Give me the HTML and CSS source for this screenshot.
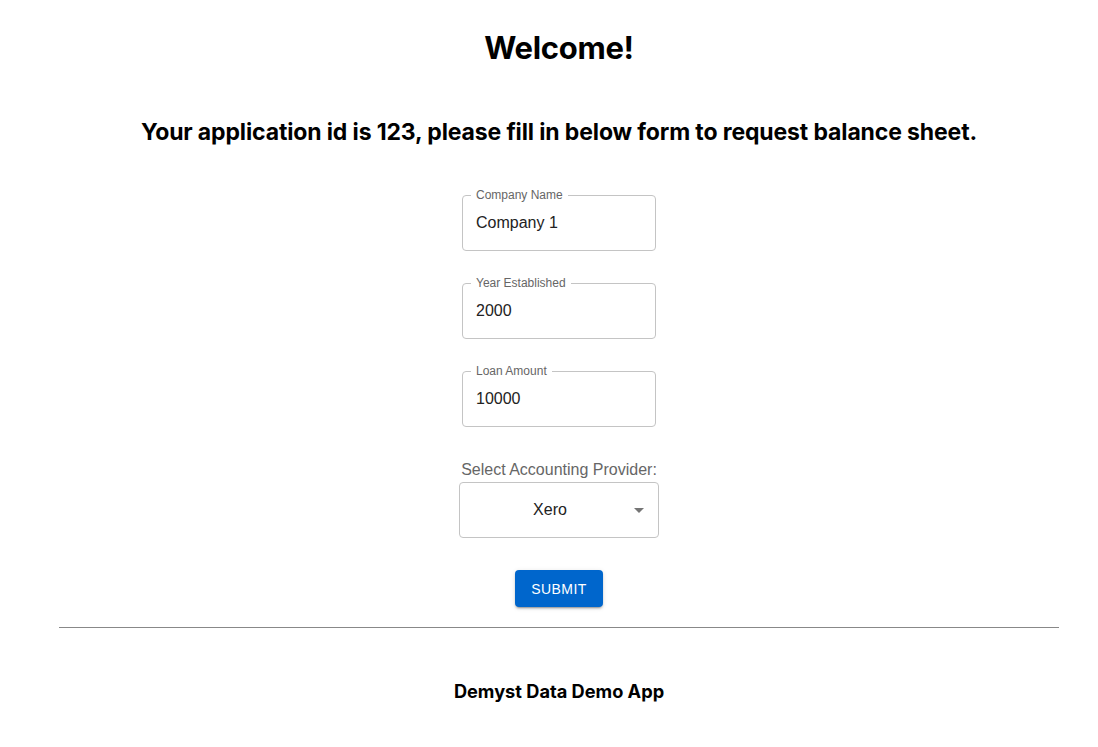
FILE: index.html
```html
<!DOCTYPE html>
<html>
<head>
<meta charset="utf-8">
<link rel="stylesheet" href="styles.css">
</head>
<body>
<div class="app">
  <h1 class="title">Welcome!</h1>
  <h2 class="subtitle">Your application id is 123, please fill in below form to request balance sheet.</h2>
  <form class="form">
    <div class="field">
      <fieldset class="outline"><legend>Company Name</legend></fieldset>
      <input class="input" type="text" value="Company 1">
    </div>
    <div class="field">
      <fieldset class="outline"><legend>Year Established</legend></fieldset>
      <input class="input" type="text" value="2000">
    </div>
    <div class="field">
      <fieldset class="outline"><legend>Loan Amount</legend></fieldset>
      <input class="input" type="text" value="10000">
    </div>
    <div class="select-group">
      <div class="select-label">Select Accounting Provider:</div>
      <div class="select">
        <span class="select-value">Xero</span>
        <svg class="caret" width="24" height="24" viewBox="0 0 24 24"><path d="M7 10l5 5 5-5z" fill="#757575"/></svg>
      </div>
    </div>
    <button class="submit" type="button">Submit</button>
  </form>
  <hr class="divider">
  <footer class="footer">Demyst Data Demo App</footer>
</div>
</body>
</html>
```
FILE: styles.css
```css
html, body {
  margin: 0;
  padding: 0;
  background: #fff;
}
.app {
  padding-left: 20px;
  font-family: Inter, "Liberation Sans", sans-serif;
  color: #000;
  text-align: center;
}
.title {
  margin: 0;
  padding-top: 28px;
  font-size: 31px;
  font-weight: 700;
  line-height: 40px;
  letter-spacing: -0.3px;
}
.subtitle {
  margin: 50px 0 0;
  font-size: 23px;
  font-weight: 700;
  line-height: 28px;
  letter-spacing: -0.13px;
}
.form {
  display: flex;
  flex-direction: column;
  align-items: center;
  margin-top: 49px;
  font-family: "Liberation Sans", Arial, sans-serif;
}
.field {
  position: relative;
  width: 194px;
  height: 56px;
  margin-bottom: 32px;
}
.outline {
  position: absolute;
  inset: -5px 0 0 0;
  margin: 0;
  padding: 0 8px;
  border: 1px solid #c4c4c4;
  border-radius: 4px;
  text-align: left;
  pointer-events: none;
}
.outline legend {
  padding: 0 5px;
  font-size: 12px;
  line-height: 11px;
  color: #666;
}
.input {
  box-sizing: border-box;
  width: 100%;
  height: 56px;
  border: none;
  background: transparent;
  padding: 0 14px;
  font-family: "Liberation Sans", Arial, sans-serif;
  font-size: 16px;
  color: #222;
  outline: none;
}
.select-group {
  display: flex;
  flex-direction: column;
  align-items: center;
  margin-top: 1px;
}
.select-label {
  font-size: 16px;
  line-height: 20px;
  color: #666;
  margin-bottom: 2px;
}
.select {
  position: relative;
  box-sizing: border-box;
  width: 200px;
  height: 56px;
  border: 1px solid #c4c4c4;
  border-radius: 4px;
  display: flex;
  align-items: center;
  justify-content: center;
}
.select-value {
  font-size: 16px;
  color: #222;
  margin-left: -18px;
}
.caret {
  position: absolute;
  right: 7px;
  top: 15px;
}
.submit {
  margin-top: 32px;
  height: 37px;
  padding: 0 16px;
  border: none;
  border-radius: 4px;
  background: #0066cc;
  color: #fff;
  font-family: "Liberation Sans", Arial, sans-serif;
  font-size: 14px;
  letter-spacing: 0.4px;
  text-transform: uppercase;
  box-shadow: 0 3px 1px -2px rgba(0,0,0,0.2), 0 2px 2px 0 rgba(0,0,0,0.14), 0 1px 5px 0 rgba(0,0,0,0.12);
}
.divider {
  width: 1000px;
  margin: 20px auto 0;
  border: none;
  border-top: 1px solid #888;
  height: 0;
}
.footer {
  margin-top: 51px;
  font-size: 18.2px;
  font-weight: 700;
  line-height: 24px;
}
```
